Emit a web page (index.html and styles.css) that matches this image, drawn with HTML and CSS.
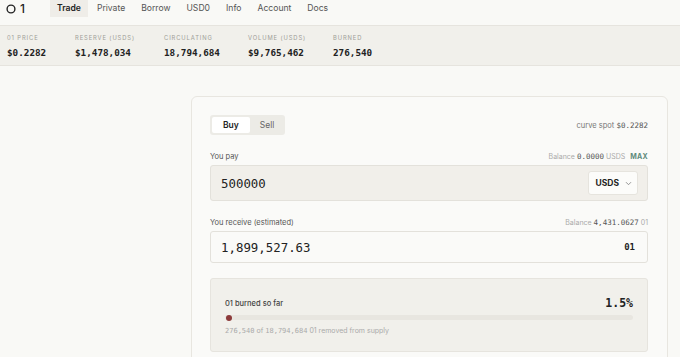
FILE: index.html
```html
<!DOCTYPE html>
<html lang="en">
<head>
  <meta charset="UTF-8">
  <meta name="viewport" content="width=device-width, initial-scale=1.0">
  <title>01 Trade</title>
  <link rel="stylesheet" href="styles.css">
</head>
<body>

  <!-- Top Navigation -->
  <nav class="nav">
    <div class="logo">
      <svg width="10" height="10" viewBox="0 0 10 10"><circle cx="5" cy="5" r="3.9" fill="none" stroke="#222" stroke-width="1.4"/></svg>
      <span>1</span>
    </div>
    <a class="nav-link active" href="#">Trade</a>
    <a class="nav-link" href="#">Private</a>
    <a class="nav-link" href="#">Borrow</a>
    <a class="nav-link" href="#">USD0</a>
    <a class="nav-link" href="#">Info</a>
    <a class="nav-link" href="#">Account</a>
    <a class="nav-link" href="#">Docs</a>
  </nav>

  <!-- Stats Bar -->
  <div class="stats">
    <div class="stat">
      <div class="stat-label">01 Price</div>
      <div class="stat-value">$0.2282</div>
    </div>
    <div class="stat">
      <div class="stat-label">Reserve (USDS)</div>
      <div class="stat-value">$1,478,034</div>
    </div>
    <div class="stat">
      <div class="stat-label">Circulating</div>
      <div class="stat-value">18,794,684</div>
    </div>
    <div class="stat">
      <div class="stat-label">Volume (USDS)</div>
      <div class="stat-value">$9,765,462</div>
    </div>
    <div class="stat">
      <div class="stat-label">Burned</div>
      <div class="stat-value">276,540</div>
    </div>
  </div>

  <main class="main">
    <div class="card">
      <div class="card-top">
        <div class="toggle">
          <button class="toggle-btn active">Buy</button>
          <button class="toggle-btn">Sell</button>
        </div>
        <div class="spot">curve spot <span class="mono">$0.2282</span></div>
      </div>

      <!-- Pay -->
      <div class="field-head">
        <span>You pay</span>
        <span class="balance">Balance <span class="mono dark">0.0000</span> USDS <span class="max">MAX</span></span>
      </div>
      <div class="input-box pay">
        <span class="amount">500000</span>
        <div class="select">
          USDS
          <svg width="7" height="5" viewBox="0 0 7 5"><path d="M1 1.2 L3.5 3.7 L6 1.2" fill="none" stroke="#888" stroke-width="0.9"/></svg>
        </div>
      </div>

      <!-- Receive -->
      <div class="field-head">
        <span>You receive (estimated)</span>
        <span class="balance">Balance <span class="mono dark">4,431.0627</span> 01</span>
      </div>
      <div class="input-box receive">
        <span class="amount">1,899,527.63</span>
        <span class="token">01</span>
      </div>

      <!-- Burn progress -->
      <div class="burn">
        <div class="burn-head">
          <span>01 burned so far</span>
          <span class="burn-pct">1.5%</span>
        </div>
        <div class="bar">
          <div class="bar-dot"></div>
        </div>
        <div class="burn-note"><span class="mono">276,540</span> of <span class="mono">18,794,684</span> 01 removed from supply</div>
      </div>
    </div>
  </main>

</body>
</html>
```

FILE: styles.css
```css
/* Base */
body {
  margin: 0;
  background-color: #f9f9f6;
  color: #222;
  font-family: Inter, "Noto Sans", sans-serif;
  font-size: 8px;
}

.mono {
  font-family: "DejaVu Sans Mono", "Liberation Mono", monospace;
}

/* Navigation */
.nav {
  display: flex;
  align-items: flex-start;
  height: 25px;
  border-bottom: 1px solid #e6e4de;
  padding-left: 6px;
}

.logo {
  display: flex;
  align-items: center;
  gap: 4px;
  height: 17px;
  margin-right: 25px;
  font-size: 12px;
  font-weight: 500;
}

.nav-link {
  display: block;
  padding: 0 7px;
  height: 17px;
  line-height: 17px;
  margin-right: 2px;
  font-size: 8.6px;
  color: #555;
  text-decoration: none;
}

.nav-link.active {
  background-color: #efede8;
  color: #222;
  font-weight: 600;
}

/* Stats */
.stats {
  display: flex;
  height: 39px;
  padding-left: 7px;
  background-color: #f1f0eb;
  border-bottom: 1px solid #e6e4de;
}

.stat {
  padding-top: 8px;
}

.stat:nth-child(1) { width: 68px; }
.stat:nth-child(2) { width: 89px; }
.stat:nth-child(3) { width: 84px; }
.stat:nth-child(4) { width: 85px; }

.stat-label {
  font-size: 5.8px;
  letter-spacing: 0.9px;
  text-transform: uppercase;
  color: #a09e98;
  height: 8px;
}

.stat-value {
  margin-top: 5px;
  font-family: "DejaVu Sans Mono", "Liberation Mono", monospace;
  font-size: 9.3px;
  font-weight: bold;
  color: #222;
}

/* Card */
.main {
  padding: 30px 12px 0 191px;
}

.card {
  background-color: #fafaf8;
  border: 1px solid #e8e6e0;
  border-radius: 6px;
  padding: 18px 19px 20px 18px;
}

.card-top {
  display: flex;
  justify-content: space-between;
  align-items: center;
}

.toggle {
  display: flex;
  background-color: #ecebe6;
  border-radius: 3px;
  padding: 2px;
  gap: 1px;
}

.toggle-btn {
  border: none;
  background: none;
  font-family: inherit;
  font-size: 8.5px;
  color: #666;
  height: 16px;
  padding: 0 9px;
  border-radius: 2px;
  cursor: pointer;
}

.toggle-btn.active {
  background-color: #fff;
  color: #222;
  font-weight: 600;
  padding: 0 11px;
}

.spot {
  font-size: 7.5px;
  color: #777;
}

.spot .mono {
  color: #555;
}

/* Fields */
.field-head {
  display: flex;
  justify-content: space-between;
  align-items: center;
  margin-top: 16px;
  height: 10px;
  margin-bottom: 4px;
  font-size: 7.5px;
  color: #555;
}

.balance {
  font-size: 7px;
  color: #aaa;
}

.balance .dark {
  font-size: 7.5px;
  color: #555;
}

.max {
  margin-left: 3px;
  color: #5f8a7c;
  font-weight: 700;
  letter-spacing: 0.3px;
}

.input-box {
  display: flex;
  justify-content: space-between;
  align-items: center;
  border: 1px solid #e3e1db;
  border-radius: 3px;
  padding: 0 9px 0 10px;
}

.input-box.pay {
  height: 34px;
  background-color: #f1efea;
}

.input-box.receive {
  height: 30px;
  background-color: #fafaf8;
  margin-bottom: 15px;
}

.amount {
  font-family: "DejaVu Sans Mono", "Liberation Mono", monospace;
  font-size: 12.4px;
  color: #222;
}

.select {
  display: flex;
  align-items: center;
  gap: 6px;
  height: 22px;
  padding: 0 5px 0 7px;
  background-color: #fcfcfa;
  border: 1px solid #e6e4de;
  border-radius: 3px;
  font-size: 8.5px;
  font-weight: 700;
}

.token {
  font-family: "DejaVu Sans Mono", "Liberation Mono", monospace;
  font-size: 9px;
  font-weight: bold;
  margin-right: 3px;
}

/* Burn */
.burn {
  background-color: #f1f0eb;
  border: 1px solid #e6e4de;
  border-radius: 3px;
  padding: 17px 14px 16px 14px;
}

.burn-head {
  display: flex;
  justify-content: space-between;
  align-items: center;
  font-size: 7.5px;
  font-weight: 500;
  color: #444;
}

.burn-pct {
  font-family: "DejaVu Sans Mono", "Liberation Mono", monospace;
  font-size: 11.5px;
  font-weight: bold;
  color: #222;
}

.bar {
  display: flex;
  align-items: center;
  margin-top: 5px;
  height: 5px;
  border-radius: 3px;
  background-color: #e8e6e0;
}

.bar-dot {
  width: 6px;
  height: 6px;
  margin-left: 1px;
  border-radius: 50%;
  background-color: #8c3a3a;
}

.burn-note {
  margin-top: 6px;
  font-size: 7px;
  color: #aaa;
}
```
